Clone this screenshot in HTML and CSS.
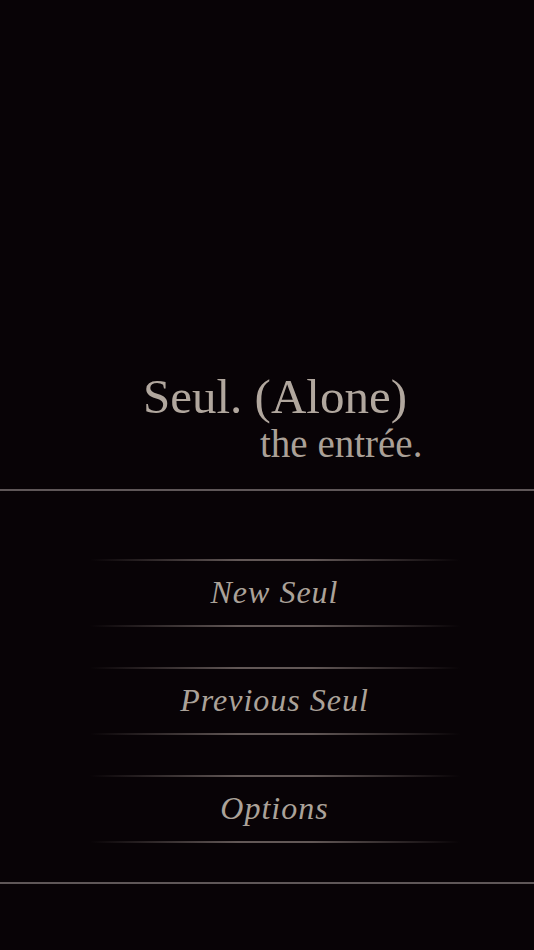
FILE: index.html
```html
<!DOCTYPE html>
<html lang="en">
<head>
<meta charset="utf-8">
<title>Seul. (Alone)</title>
<link rel="stylesheet" href="styles.css">
</head>
<body>
<main class="screen">
  <header class="brand">
    <h1 class="title">Seul. (Alone)</h1>
    <p class="subtitle">the entrée.</p>
  </header>
  <div class="rule"></div>
  <nav class="menu">
    <a class="item" href="#">
      <span class="line"></span>
      <span class="label">New Seul</span>
      <span class="line"></span>
    </a>
    <a class="item" href="#">
      <span class="line"></span>
      <span class="label">Previous Seul</span>
      <span class="line"></span>
    </a>
    <a class="item" href="#">
      <span class="line"></span>
      <span class="label">Options</span>
      <span class="line"></span>
    </a>
  </nav>
  <div class="rule rule-bottom"></div>
</main>
</body>
</html>
```
FILE: styles.css
```css
html, body {
  margin: 0;
  padding: 0;
  background: #080306;
}

.screen {
  width: 534px;
  height: 950px;
  display: flex;
  flex-direction: column;
  background: #080306;
  overflow: hidden;
}

.brand {
  padding-top: 372px;
  display: flex;
  flex-direction: column;
}

.title {
  margin: 0 0 0 143px;
  font-family: "Liberation Serif", serif;
  font-weight: normal;
  font-size: 49px;
  line-height: 49px;
  color: #b1a79e;
  white-space: nowrap;
}

.subtitle {
  margin: 4px 0 0 260px;
  font-family: "Liberation Serif", serif;
  font-size: 39px;
  line-height: 38px;
  color: #aaa097;
  white-space: nowrap;
}

.rule {
  margin-top: 26px;
  height: 2px;
  background: #5f5758;
}

.rule-bottom {
  margin-top: 39px;
}

.menu {
  margin-top: 68px;
  display: flex;
  flex-direction: column;
  gap: 40px;
  padding-left: 15px;
}

.item {
  display: flex;
  flex-direction: column;
  align-items: center;
  text-decoration: none;
}

.line {
  display: block;
  width: 370px;
  height: 2px;
  background: linear-gradient(to right,
    rgba(120, 108, 106, 0) 0%,
    rgba(120, 108, 106, 0.3) 15%,
    rgba(128, 116, 113, 0.75) 40%,
    rgba(128, 116, 113, 0.75) 60%,
    rgba(120, 108, 106, 0.3) 85%,
    rgba(120, 108, 106, 0) 100%);
}

.label {
  display: block;
  height: 64px;
  box-sizing: border-box;
  padding-top: 17px;
  font-family: "Liberation Serif", serif;
  font-style: italic;
  font-size: 32px;
  line-height: 28px;
  letter-spacing: 1px;
  color: #aba299;
  white-space: nowrap;
}
```
